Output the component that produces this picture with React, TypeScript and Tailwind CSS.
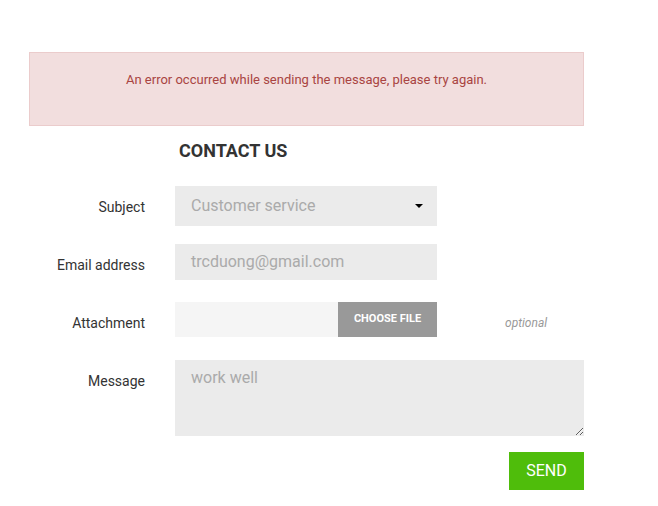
export default function App() {
  return (
    <div className="min-h-screen bg-white font-['Roboto',sans-serif] text-[#333]">
      <div className="pl-[29px] pt-[52px] w-[584px]">
        {/* Error alert */}
        <div className="h-[74px] border border-[#ebcccc] bg-[#f2dede] pt-[19px] text-center text-[13px] leading-4 text-[#a94442]">
          An error occurred while sending the message, please try again.
        </div>

        <h2 className="mt-[13px] pl-[150px] text-[18px] font-bold leading-6 text-[#333]">CONTACT US</h2>

        <form className="mt-[23px] flex flex-col">
          {/* Subject */}
          <div className="flex items-start gap-[30px]">
            <label className="w-[116px] pt-[11px] text-right text-[14px] leading-5">Subject</label>
            <div className="relative flex h-10 w-[262px] items-center bg-[#ebebeb] pl-4 text-[16px] text-[#aaa]">
              Customer service
              <span className="absolute right-[14px] top-[18px] h-0 w-0 border-x-[4px] border-t-[4px] border-x-transparent border-t-black" />
            </div>
          </div>

          {/* Email */}
          <div className="mt-[18px] flex items-start gap-[30px]">
            <label className="w-[116px] pt-[11px] text-right text-[14px] leading-5">Email address</label>
            <div className="flex h-9 w-[262px] items-center bg-[#ebebeb] pl-4 text-[16px] text-[#aaa]">
              trcduong@gmail.com
            </div>
          </div>

          {/* Attachment */}
          <div className="mt-[22px] flex items-start gap-[30px]">
            <label className="w-[116px] pt-[11px] text-right text-[14px] leading-5">Attachment</label>
            <div className="flex h-[35px] w-[262px]">
              <div className="flex-1 bg-[#f5f5f5]" />
              <button
                type="button"
                className="flex w-[99px] items-center justify-center bg-[#999] text-[11px] font-bold uppercase text-white"
              >
                Choose file
              </button>
            </div>
            <span className="ml-[38px] pt-[11px] text-[12px] italic leading-5 text-[#999]">optional</span>
          </div>

          {/* Message */}
          <div className="mt-[23px] flex items-start gap-[30px]">
            <label className="w-[116px] pt-[11px] text-right text-[14px] leading-5">Message</label>
            <textarea
              defaultValue="work well"
              className="h-[76px] w-[409px] resize-y bg-[#ebebeb] px-4 pt-[8px] text-[16px] leading-5 text-[#aaa] outline-none"
            />
          </div>

          <div className="mt-4 flex justify-end">
            <button type="button" className="h-[38px] w-[75px] bg-[#4fbd0b] text-[16px] text-white">
              SEND
            </button>
          </div>
        </form>
      </div>
    </div>
  )
}
